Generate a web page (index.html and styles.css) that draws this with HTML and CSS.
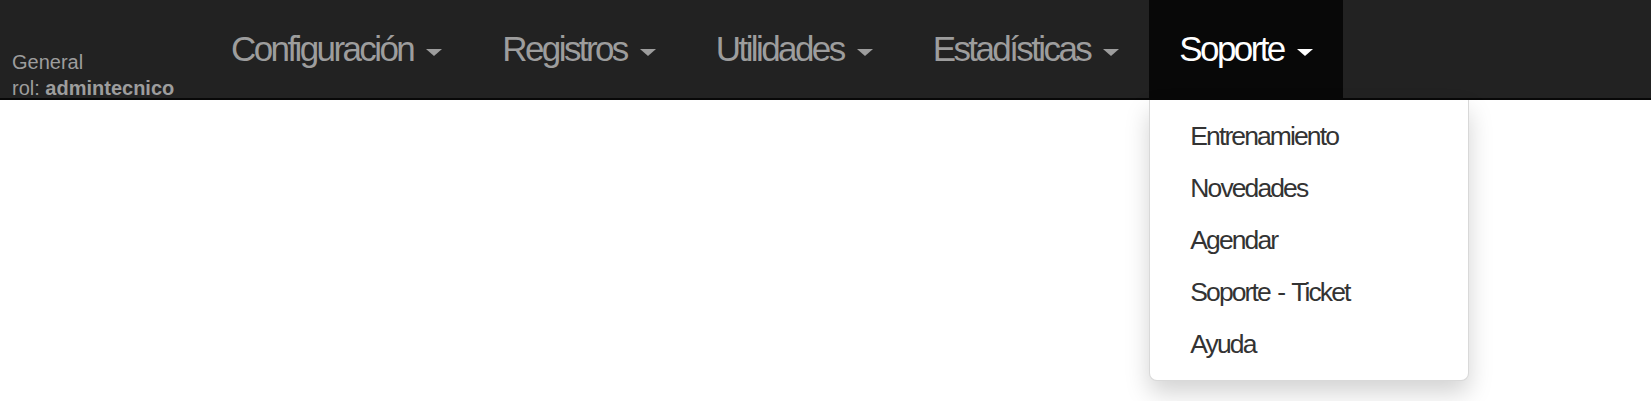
FILE: index.html
```html
<!DOCTYPE html>
<html lang="es">
<head>
<meta charset="utf-8">
<title>Soporte</title>
<link rel="stylesheet" href="styles.css">
</head>
<body>
<nav class="navbar">
  <div class="brand">
    <span class="brand-line">General</span>
    <span class="brand-line">rol: <b>admintecnico</b></span>
  </div>
  <ul class="nav">
    <li class="nav-item"><a class="nav-link" href="#">Configuración <span class="caret"></span></a></li>
    <li class="nav-item"><a class="nav-link" href="#">Registros <span class="caret"></span></a></li>
    <li class="nav-item"><a class="nav-link" href="#">Utilidades <span class="caret"></span></a></li>
    <li class="nav-item"><a class="nav-link" href="#">Estadísticas <span class="caret"></span></a></li>
    <li class="nav-item open"><a class="nav-link" href="#">Soporte <span class="caret"></span></a>
      <ul class="menu-list">
        <li><a class="menu-item" href="#">Entrenamiento</a></li>
        <li><a class="menu-item" href="#">Novedades</a></li>
        <li><a class="menu-item" href="#">Agendar</a></li>
        <li><a class="menu-item" href="#">Soporte - Ticket</a></li>
        <li><a class="menu-item" href="#">Ayuda</a></li>
      </ul>
    </li>
  </ul>
</nav>
</body>
</html>
```
FILE: styles.css
```css
* { box-sizing: border-box; }
html, body { margin: 0; padding: 0; background: #fff; }
body {
  min-height: 100vh;
  font-family: "Liberation Sans", Arial, sans-serif;
  color: #333;
}
.navbar {
  display: flex;
  height: 100px;
  background: #222;
  border-bottom: 2px solid #080808;
}
.brand {
  flex: 0 0 201px;
  display: flex;
  flex-direction: column;
  padding: 49px 0 0 12px;
  font-size: 20px;
  line-height: 26px;
  color: #9d9d9d;
  white-space: nowrap;
}
.brand b { font-weight: bold; }
.nav {
  display: flex;
  margin: 0;
  padding: 0;
  list-style: none;
}
.nav-item { position: relative; }
.nav-link {
  display: block;
  height: 98px;
  padding: 29px 30px 29px;
  font-size: 35px;
  letter-spacing: -2.6px;
  line-height: 40px;
  color: #9d9d9d;
  text-decoration: none;
  white-space: nowrap;
}
.open > .nav-link {
  color: #fff;
  background: #080808;
  height: 100px;
  margin-bottom: -2px;
}
.caret {
  display: inline-block;
  width: 0;
  height: 0;
  margin-left: 6px;
  vertical-align: 5px;
  border-top: 7px solid;
  border-left: 8px solid transparent;
  border-right: 8px solid transparent;
}
.menu-list {
  position: absolute;
  z-index: 10;
  top: 100px;
  left: 0;
  min-width: 320px;
  margin: 0;
  padding: 10px 0;
  list-style: none;
  background: #fff;
  border: 1px solid rgba(0, 0, 0, .15);
  border-top: 0;
  border-radius: 0 0 8px 8px;
  box-shadow: 0 12px 24px rgba(0, 0, 0, .175);
}
.menu-item {
  display: block;
  padding: 6px 40px;
  font-size: 26.5px;
  letter-spacing: -1.9px;
  word-spacing: 2px;
  line-height: 40px;
  color: #333;
  text-decoration: none;
  white-space: nowrap;
}
```
